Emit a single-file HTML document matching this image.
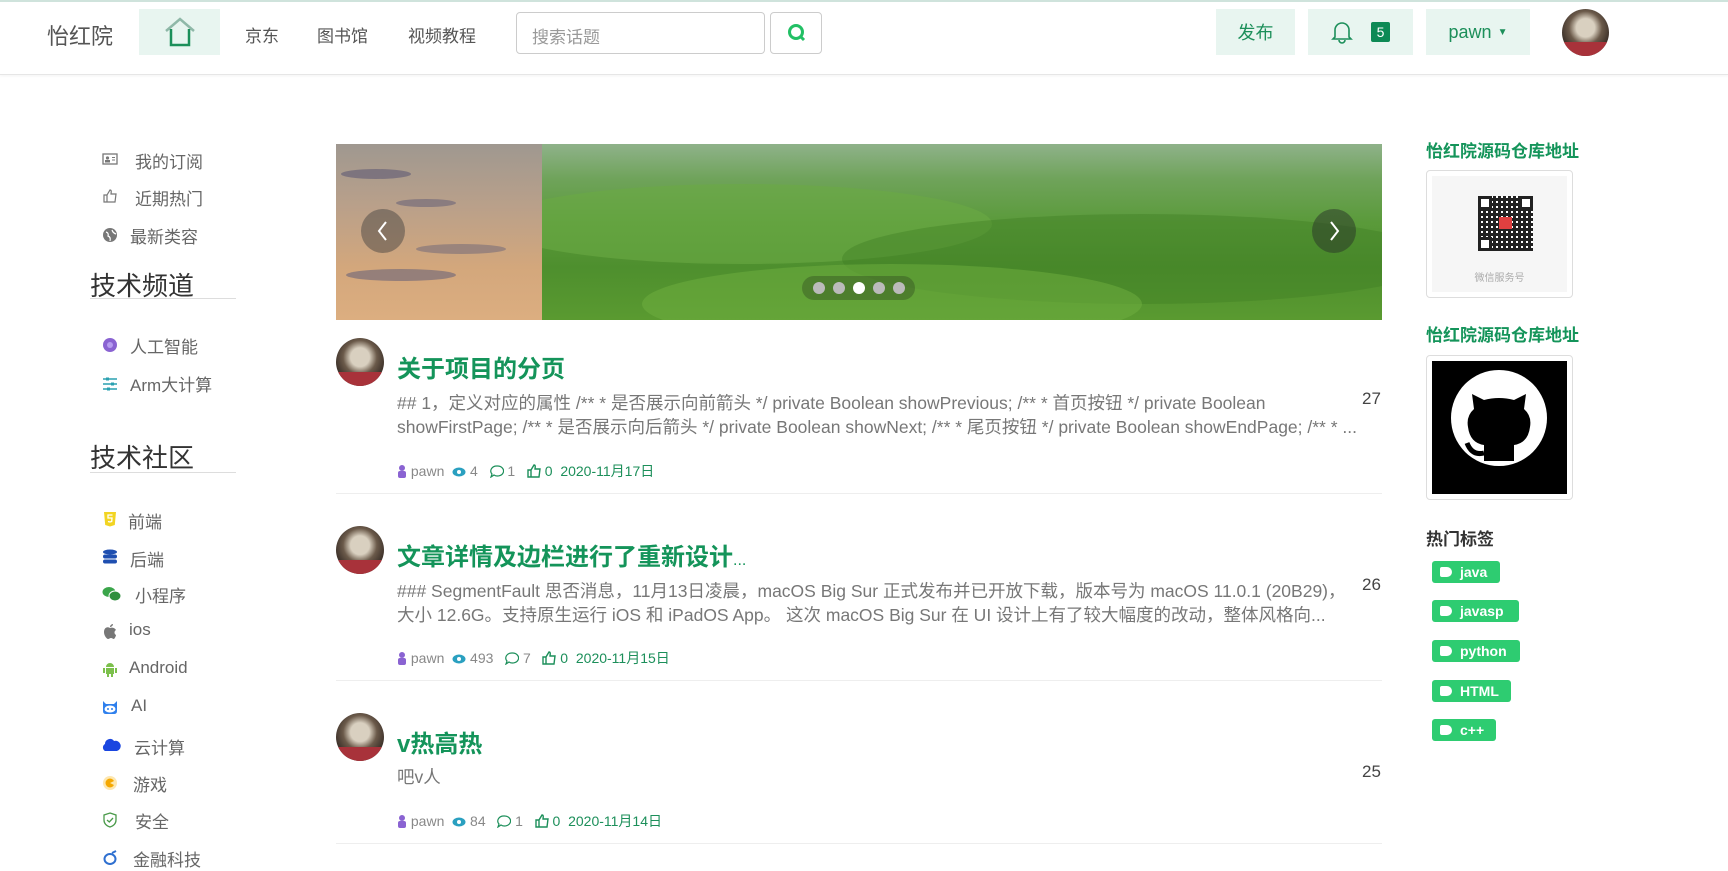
<!DOCTYPE html>
<html><head><meta charset="utf-8"><style>
*{margin:0;padding:0;box-sizing:border-box}
body{width:1728px;height:865px;overflow:hidden;background:#fff;font-family:"Liberation Sans","Noto Sans CJK SC",sans-serif;position:relative;color:#333}
.a{position:absolute;white-space:nowrap}
.hdr{position:absolute;left:0;top:0;width:1728px;height:75px;border-top:2px solid #cfe3dc;border-bottom:1px solid #e6e6e6;box-shadow:0 1px 3px rgba(0,0,0,.05)}
.nav{font-size:17px;color:#555;top:22px}
.gbtn{position:absolute;background:#e8f5f0;top:9px;height:46px;color:#1c8f5a;font-size:18px;display:flex;align-items:center;justify-content:center}
.side{font-size:17px;color:#666}
.ic{position:absolute;width:16px;height:16px}
.h2{font-size:26px;color:#333}
.hl{position:absolute;left:90px;width:146px;height:1px;background:#ddd}
.t{font-size:24px;font-weight:bold;color:#14945a}
.ex{font-size:17.5px;color:#777;line-height:24px}
.num{font-size:17px;color:#444}
.meta{font-size:14px;color:#888}
.meta svg{vertical-align:-2px}
.sep{position:absolute;left:336px;width:1046px;height:1px;background:#eee}
.av{position:absolute;width:48px;height:48px;border-radius:50%;background:radial-gradient(circle at 50% 40%,#d9d0c0 0 25%,#6b5a4a 45%,#3a2f28 70%);overflow:hidden}
.av:after{content:"";position:absolute;left:0;bottom:0;width:100%;height:30%;background:#a8323a}
.rt{font-size:17px;font-weight:bold;color:#14945a}
.tag{position:absolute;left:1432px;height:22px;background:#2ecc71;border-radius:3px;color:#fff;font-weight:bold;font-size:14px;line-height:22px;padding-left:28px}
.tag:before{content:"";position:absolute;left:8px;top:6px;width:12px;height:10px;background:#fff;border-radius:2px 5px 5px 2px}
</style></head><body>
<div class="hdr"></div>
<div class="a" style="left:47px;top:19px;font-size:22px;color:#555">怡红院</div>
<div class="gbtn" style="left:139px;width:81px">
<svg width="34" height="32" viewBox="0 0 34 32"><path d="M3 15 L17 3 L31 15" fill="none" stroke="#8fb8a8" stroke-width="2.5"/><path d="M8 13 V29 H26 V13" fill="none" stroke="#1c8f5a" stroke-width="2.5"/></svg></div>
<div class="a nav" style="left:245px">京东</div>
<div class="a nav" style="left:317px">图书馆</div>
<div class="a nav" style="left:408px">视频教程</div>
<div class="a" style="left:516px;top:12px;width:249px;height:42px;border:1px solid #ccc;border-radius:4px;font-size:17px;color:#999;padding:10px 0 0 15px">搜索话题</div>
<div class="a" style="left:770px;top:12px;width:52px;height:42px;border:1px solid #ccc;border-radius:4px">
<svg width="52" height="42" viewBox="0 0 52 42"><circle cx="25" cy="19" r="6.5" fill="none" stroke="#22c065" stroke-width="3"/><path d="M29.5 23.5 L33 27" stroke="#22c065" stroke-width="3"/></svg></div>
<div class="gbtn" style="left:1216px;width:79px">发布</div>
<div class="gbtn" style="left:1308px;width:105px">
<svg width="22" height="24" viewBox="0 0 22 24" style="margin-right:18px"><path d="M4 17 V10 A7 7 0 0 1 18 10 V17 L20 19 H2 Z M8 20 A3 3 0 0 0 14 20" fill="none" stroke="#1c8f5a" stroke-width="1.6"/></svg><span style="background:#0d8a55;color:#fff;font-size:14px;padding:2px 6px;border-radius:2px">5</span></div>
<div class="gbtn" style="left:1426px;width:104px">pawn <span style="font-size:10px;margin-left:6px">▼</span></div>
<div class="av" style="left:1562px;top:9px;width:47px;height:47px"></div>

<!-- sidebar -->
<svg class="ic" style="left:102px;top:151px" viewBox="0 0 16 16"><rect x="1" y="3" width="14" height="10" fill="none" stroke="#777" stroke-width="1.3"/><circle cx="5.5" cy="7" r="1.6" fill="#777"/><rect x="3" y="9" width="5" height="2.5" fill="#777"/><path d="M10 6.5h3M10 9h3" stroke="#777"/></svg>
<div class="a side" style="left:135px;top:148px">我的订阅</div>
<svg class="ic" style="left:102px;top:188px" viewBox="0 0 16 16"><path d="M2 7h3v7H2z M5 7 L8 2 C10 2 9 5 9 6 H14 L13 14 H5" fill="none" stroke="#777" stroke-width="1.2"/></svg>
<div class="a side" style="left:135px;top:185px">近期热门</div>
<svg class="ic" style="left:102px;top:227px" viewBox="0 0 16 16"><circle cx="8" cy="8" r="7" fill="#777"/><path d="M4 5 Q7 6 6 9 Q9 10 8 14 M10 3 Q11 6 14 7" stroke="#fff" fill="none" stroke-width="1.2"/></svg>
<div class="a side" style="left:130px;top:223px">最新类容</div>
<div class="a h2" style="left:90px;top:266px">技术频道</div>
<div class="hl" style="top:298px"></div>
<svg class="ic" style="left:102px;top:337px" viewBox="0 0 16 16"><circle cx="8" cy="8" r="7" fill="#8a63d2"/><circle cx="8" cy="8" r="3" fill="#b69cf0"/></svg>
<div class="a side" style="left:130px;top:333px">人工智能</div>
<svg class="ic" style="left:102px;top:376px" viewBox="0 0 16 16"><path d="M1 3h14M1 8h14M1 13h14" stroke="#2aa0b0" stroke-width="1.5"/><rect x="4" y="1.5" width="3" height="3" fill="#2aa0b0"/><rect x="9" y="6.5" width="3" height="3" fill="#2aa0b0"/><rect x="5" y="11.5" width="3" height="3" fill="#2aa0b0"/></svg>
<div class="a side" style="left:130px;top:371px">Arm大计算</div>
<div class="a h2" style="left:90px;top:438px">技术社区</div>
<div class="hl" style="top:472px"></div>
<svg class="ic" style="left:102px;top:511px" viewBox="0 0 16 16"><path d="M2 1h12l-1.2 13L8 15.5 3.2 14z" fill="#f2d422"/><path d="M10.5 4H6v3h4l-.3 3.5L8 11l-2-.5" fill="none" stroke="#fff" stroke-width="1.3"/></svg>
<div class="a side" style="left:128px;top:508px">前端</div>
<svg class="ic" style="left:102px;top:549px" viewBox="0 0 16 16"><ellipse cx="8" cy="3" rx="7" ry="2.5" fill="#1f4fb0"/><rect x="1" y="5.5" width="14" height="4" rx="2" fill="#1f4fb0"/><rect x="1" y="10.5" width="14" height="4" rx="2" fill="#1f4fb0"/></svg>
<div class="a side" style="left:130px;top:546px">后端</div>
<svg class="ic" style="left:102px;top:586px;width:20px" viewBox="0 0 20 16"><ellipse cx="7" cy="6" rx="6.5" ry="5" fill="#3aa54a"/><ellipse cx="13" cy="10" rx="6" ry="5" fill="#2f8f3e" stroke="#fff"/></svg>
<div class="a side" style="left:135px;top:582px">小程序</div>
<svg class="ic" style="left:102px;top:624px" viewBox="0 0 16 16"><path d="M8 4 C5 2 2 4 2 8 C2 12 5 15 6 15 C7 15 8 14 9 14 C10 14 11 15 12 15 C13 14 14 12 14 11 C12 10 12 7 14 6 C13 4 10 3 8 4 M8 3 C8 1 10 0 11 0 C11 2 9 3 8 3" fill="#777"/></svg>
<div class="a side" style="left:129px;top:620px">ios</div>
<svg class="ic" style="left:102px;top:661px" viewBox="0 0 16 16"><path d="M4 6 A4 4 0 0 1 12 6z M4 7h8v6H4z M1 7h2v5H1z M13 7h2v5h-2z M5 13h2v3H5z M9 13h2v3H9z" fill="#7cc04c"/></svg>
<div class="a side" style="left:129px;top:658px">Android</div>
<svg class="ic" style="left:102px;top:699px" viewBox="0 0 16 16"><path d="M1 2 L4 5 H12 L15 2 V12 Q15 15 12 15 H4 Q1 15 1 12z" fill="#2f80ed"/><ellipse cx="8" cy="10" rx="5.5" ry="3.5" fill="#fff"/><circle cx="6" cy="10" r="1" fill="#2f80ed"/><circle cx="10" cy="10" r="1" fill="#2f80ed"/></svg>
<div class="a side" style="left:131px;top:696px">AI</div>
<svg class="ic" style="left:101px;top:737px;width:20px" viewBox="0 0 20 16"><path d="M4 14 A4 4 0 0 1 4 7 A5 5 0 0 1 13 4 A5 5 0 0 1 16 14z" fill="#1a46e0"/></svg>
<div class="a side" style="left:134px;top:734px">云计算</div>
<svg class="ic" style="left:102px;top:775px" viewBox="0 0 16 16"><circle cx="8" cy="8" r="7" fill="#fde7b0"/><circle cx="8" cy="8" r="4.5" fill="#f5a800"/><path d="M8 8 L14 5 L14 11z" fill="#fde7b0"/></svg>
<div class="a side" style="left:133px;top:771px">游戏</div>
<svg class="ic" style="left:102px;top:812px" viewBox="0 0 16 16"><path d="M8 1 L14 3 V8 Q14 13 8 15 Q2 13 2 8 V3z" fill="none" stroke="#4a9a4a" stroke-width="1.3"/><path d="M5 8 L7.3 10 L11 6" fill="none" stroke="#4a9a4a" stroke-width="1.3"/></svg>
<div class="a side" style="left:135px;top:808px">安全</div>
<svg class="ic" style="left:102px;top:850px" viewBox="0 0 16 16"><ellipse cx="8" cy="9" rx="5.5" ry="5" fill="none" stroke="#2f70d0" stroke-width="2"/><path d="M10 3 L14 1" stroke="#2f70d0" stroke-width="2"/></svg>
<div class="a side" style="left:133px;top:846px">金融科技</div>

<!-- carousel -->
<div class="a" style="left:336px;top:144px;width:206px;height:176px;background:linear-gradient(180deg,#9f9890 0%,#b9a08a 35%,#d3a77c 70%,#dcae80 100%);overflow:hidden">
<div style="position:absolute;left:5px;top:25px;width:70px;height:10px;background:#6a6478;border-radius:50%;opacity:.7"></div>
<div style="position:absolute;left:60px;top:55px;width:60px;height:8px;background:#6a6478;border-radius:50%;opacity:.6"></div>
<div style="position:absolute;left:10px;top:125px;width:110px;height:12px;background:#6a6478;border-radius:50%;opacity:.6"></div>
<div style="position:absolute;left:80px;top:100px;width:90px;height:10px;background:#6a6478;border-radius:50%;opacity:.5"></div></div>
<div class="a" style="left:542px;top:144px;width:840px;height:176px;background:linear-gradient(180deg,#8fb28a 0%,#6fa35a 20%,#5a9a3a 45%,#4e8f2e 70%,#5a9a30 100%);overflow:hidden">
<div style="position:absolute;left:-50px;top:40px;width:500px;height:80px;border-radius:50%;background:#6aaa45;opacity:.6"></div>
<div style="position:absolute;left:300px;top:70px;width:600px;height:90px;border-radius:50%;background:#3f7e22;opacity:.4"></div>
<div style="position:absolute;left:100px;top:120px;width:500px;height:80px;border-radius:50%;background:#6fb040;opacity:.5"></div></div>
<div class="a" style="left:361px;top:209px;width:44px;height:44px;border-radius:50%;background:rgba(60,60,60,.45)"><svg width="44" height="44"><path d="M25 13 L18 22 L25 31" stroke="#fff" stroke-width="2" fill="none"/></svg></div>
<div class="a" style="left:1312px;top:209px;width:44px;height:44px;border-radius:50%;background:rgba(40,50,40,.5)"><svg width="44" height="44"><path d="M19 13 L26 22 L19 31" stroke="#fff" stroke-width="2" fill="none"/></svg></div>
<div class="a" style="left:802px;top:276px;width:113px;height:24px;border-radius:12px;background:rgba(40,60,30,.35)"></div>
<div class="a" style="left:813px;top:282px;width:12px;height:12px;border-radius:50%;background:#bbb"></div>
<div class="a" style="left:833px;top:282px;width:12px;height:12px;border-radius:50%;background:#bbb"></div>
<div class="a" style="left:853px;top:282px;width:12px;height:12px;border-radius:50%;background:#fff"></div>
<div class="a" style="left:873px;top:282px;width:12px;height:12px;border-radius:50%;background:#bbb"></div>
<div class="a" style="left:893px;top:282px;width:12px;height:12px;border-radius:50%;background:#bbb"></div>

<!-- posts -->
<div class="av" style="left:336px;top:338px"></div>
<div class="a t" style="left:397px;top:349px">关于项目的分页</div>
<div class="a ex" style="left:397px;top:391px">## 1，定义对应的属性 /** * 是否展示向前箭头 */ private Boolean showPrevious; /** * 首页按钮 */ private Boolean<br>showFirstPage; /** * 是否展示向后箭头 */ private Boolean showNext; /** * 尾页按钮 */ private Boolean showEndPage; /** * ...</div>
<div class="a num" style="left:1362px;top:389px">27</div>
<div class="a meta" style="left:397px;top:461px"><svg width="10" height="14"><circle cx="5" cy="4" r="3" fill="#8a63d2"/><rect x="1" y="7" width="8" height="7" rx="2" fill="#8a63d2"/></svg> pawn &nbsp;<svg width="14" height="12"><ellipse cx="7" cy="6" rx="6.5" ry="4.5" fill="#2aa0c0"/><circle cx="7" cy="6" r="2" fill="#fff"/></svg> 4 &nbsp;&nbsp;<svg width="14" height="13"><path d="M7 1 A6 5 0 1 1 4 10 L1 12 L2 9 A6 5 0 0 1 7 1z" fill="none" stroke="#1c8f5a" stroke-width="1.2"/></svg> 1 &nbsp;&nbsp;<span style="color:#1c8f5a"><svg width="14" height="14"><path d="M1 6h3v7H1z M4 6 L7 1 C9 1 8 4 8 5 H13 L12 13 H4" fill="none" stroke="#1c8f5a" stroke-width="1.4"/></svg> 0 &nbsp;2020-11月17日</span></div>
<div class="sep" style="top:493px"></div>

<div class="av" style="left:336px;top:526px"></div>
<div class="a t" style="left:397px;top:537px">文章详情及边栏进行了重新设计<span style="font-size:16px;font-weight:normal">...</span></div>
<div class="a ex" style="left:397px;top:579px">### SegmentFault 思否消息，11月13日凌晨，macOS Big Sur 正式发布并已开放下载，版本号为 macOS 11.0.1 (20B29)，<br>大小 12.6G。支持原生运行 iOS 和 iPadOS App。 这次 macOS Big Sur 在 UI 设计上有了较大幅度的改动，整体风格向...</div>
<div class="a num" style="left:1362px;top:575px">26</div>
<div class="a meta" style="left:397px;top:648px"><svg width="10" height="14"><circle cx="5" cy="4" r="3" fill="#8a63d2"/><rect x="1" y="7" width="8" height="7" rx="2" fill="#8a63d2"/></svg> pawn &nbsp;<svg width="14" height="12"><ellipse cx="7" cy="6" rx="6.5" ry="4.5" fill="#2aa0c0"/><circle cx="7" cy="6" r="2" fill="#fff"/></svg> 493 &nbsp;&nbsp;<svg width="14" height="13"><path d="M7 1 A6 5 0 1 1 4 10 L1 12 L2 9 A6 5 0 0 1 7 1z" fill="none" stroke="#1c8f5a" stroke-width="1.2"/></svg> 7 &nbsp;&nbsp;<span style="color:#1c8f5a"><svg width="14" height="14"><path d="M1 6h3v7H1z M4 6 L7 1 C9 1 8 4 8 5 H13 L12 13 H4" fill="none" stroke="#1c8f5a" stroke-width="1.4"/></svg> 0 &nbsp;2020-11月15日</span></div>
<div class="sep" style="top:680px"></div>

<div class="av" style="left:336px;top:713px"></div>
<div class="a t" style="left:397px;top:724px">v热高热</div>
<div class="a ex" style="left:397px;top:765px">吧v人</div>
<div class="a num" style="left:1362px;top:762px">25</div>
<div class="a meta" style="left:397px;top:811px"><svg width="10" height="14"><circle cx="5" cy="4" r="3" fill="#8a63d2"/><rect x="1" y="7" width="8" height="7" rx="2" fill="#8a63d2"/></svg> pawn &nbsp;<svg width="14" height="12"><ellipse cx="7" cy="6" rx="6.5" ry="4.5" fill="#2aa0c0"/><circle cx="7" cy="6" r="2" fill="#fff"/></svg> 84 &nbsp;&nbsp;<svg width="14" height="13"><path d="M7 1 A6 5 0 1 1 4 10 L1 12 L2 9 A6 5 0 0 1 7 1z" fill="none" stroke="#1c8f5a" stroke-width="1.2"/></svg> 1 &nbsp;&nbsp;<span style="color:#1c8f5a"><svg width="14" height="14"><path d="M1 6h3v7H1z M4 6 L7 1 C9 1 8 4 8 5 H13 L12 13 H4" fill="none" stroke="#1c8f5a" stroke-width="1.4"/></svg> 0 &nbsp;2020-11月14日</span></div>
<div class="sep" style="top:843px"></div>

<!-- right -->
<div class="a rt" style="left:1426px;top:137px">怡红院源码仓库地址</div>
<div class="a" style="left:1426px;top:170px;width:147px;height:128px;border:1px solid #ddd;border-radius:4px;padding:5px"><div style="background:#f6f6f6;width:100%;height:100%;position:relative">
<div style="position:absolute;left:46px;top:20px;width:55px;height:55px;background:repeating-linear-gradient(90deg,#222 0 3px,transparent 3px 5px),repeating-linear-gradient(0deg,#222 0 3px,#fff 3px 5px)"></div>
<div style="position:absolute;left:46px;top:20px;width:14px;height:14px;border:3px solid #222;background:#fff"></div>
<div style="position:absolute;left:87px;top:20px;width:14px;height:14px;border:3px solid #222;background:#fff"></div>
<div style="position:absolute;left:46px;top:61px;width:14px;height:14px;border:3px solid #222;background:#fff"></div>
<div style="position:absolute;left:67px;top:41px;width:13px;height:12px;background:#e04040"></div>
<div style="position:absolute;left:0;top:93px;width:100%;text-align:center;font-size:10px;color:#aaa">微信服务号</div></div></div>
<div class="a rt" style="left:1426px;top:321px">怡红院源码仓库地址</div>
<div class="a" style="left:1426px;top:355px;width:147px;height:145px;border:1px solid #ddd;border-radius:4px;padding:5px"><div style="background:#000;width:100%;height:100%">
<svg width="135" height="133" viewBox="0 0 135 133"><circle cx="67" cy="57" r="48" fill="#fff"/><path d="M52 100 V84 Q38 82 36 66 Q34 55 42 48 L40 33 L52 39 Q67 35 82 39 L94 33 L92 48 Q100 55 98 66 Q96 82 82 84 V100z" fill="#000"/><path d="M52 92 Q40 95 35 82" stroke="#000" stroke-width="5" fill="none"/></svg></div></div>
<div class="a" style="left:1426px;top:525px;font-size:17px;font-weight:bold;color:#333">热门标签</div>
<div class="tag" style="top:561px;width:68px">java</div>
<div class="tag" style="top:600px;width:87px">javasp</div>
<div class="tag" style="top:640px;width:88px">python</div>
<div class="tag" style="top:680px;width:79px">HTML</div>
<div class="tag" style="top:719px;width:64px">c++</div>
</body></html>
